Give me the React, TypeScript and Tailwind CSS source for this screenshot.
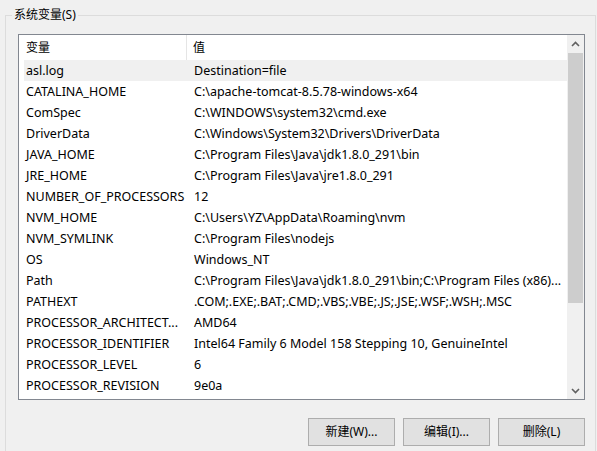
const rows: [string, string][] = [
  ["asl.log", "Destination=file"],
  ["CATALINA_HOME", "C:\\apache-tomcat-8.5.78-windows-x64"],
  ["ComSpec", "C:\\WINDOWS\\system32\\cmd.exe"],
  ["DriverData", "C:\\Windows\\System32\\Drivers\\DriverData"],
  ["JAVA_HOME", "C:\\Program Files\\Java\\jdk1.8.0_291\\bin"],
  ["JRE_HOME", "C:\\Program Files\\Java\\jre1.8.0_291"],
  ["NUMBER_OF_PROCESSORS", "12"],
  ["NVM_HOME", "C:\\Users\\YZ\\AppData\\Roaming\\nvm"],
  ["NVM_SYMLINK", "C:\\Program Files\\nodejs"],
  ["OS", "Windows_NT"],
  ["Path", "C:\\Program Files\\Java\\jdk1.8.0_291\\bin;C:\\Program Files (x86)..."],
  ["PATHEXT", ".COM;.EXE;.BAT;.CMD;.VBS;.VBE;.JS;.JSE;.WSF;.WSH;.MSC"],
  ["PROCESSOR_ARCHITECT...", "AMD64"],
  ["PROCESSOR_IDENTIFIER", "Intel64 Family 6 Model 158 Stepping 10, GenuineIntel"],
  ["PROCESSOR_LEVEL", "6"],
  ["PROCESSOR_REVISION", "9e0a"],
];

const font = { fontFamily: '"Noto Sans", "Noto Sans CJK SC", sans-serif' };

function Chevron({ up }: { up?: boolean }) {
  return (
    <svg width="9" height="6" viewBox="0 0 9 6" className={up ? "" : "rotate-180"}>
      <path d="M1 5 L4.5 1.5 L8 5" fill="none" stroke="#606060" strokeWidth="1.6" />
    </svg>
  );
}

function Btn({ label }: { label: string }) {
  return (
    <button className="w-[87px] h-[28px] border border-[#adadad] bg-[#e1e1e1] text-[12px] text-black leading-none">
      {label}
    </button>
  );
}

export default function App() {
  return (
    <div className="w-[597px] h-[451px] bg-[#f0f0f0] pt-[15px] pl-[5px] overflow-hidden text-[12px] text-black" style={font}>
      <div className="relative w-[591px] h-[450px] border-t border-l border-r border-[#dcdcdc] pl-[12px] pt-[18px]">
        <span className="absolute left-[6px] -top-[9px] px-[2px] bg-[#f0f0f0] leading-[16px]">系统变量(S)</span>

        <div className="w-[567px] h-[366px] border border-[#828790] bg-white flex">
          <div className="flex-1 flex flex-col">
            <div className="h-[25px] flex items-center">
              <div className="w-[168px] h-full pl-[7px] flex items-center border-r border-[#e5e5e5]">变量</div>
              <div className="pl-[6px]">值</div>
            </div>
            {rows.map(([name, value], idx) => (
              <div key={idx} className={`ml-[5px] h-[21px] pt-[1px] flex items-center whitespace-nowrap text-[12.5px] ${idx === 0 ? "bg-[#f0f0f0]" : ""}`}>
                <div className="w-[163px] pl-[2px]">{name}</div>
                <div className="pl-[7px]">{value}</div>
              </div>
            ))}
          </div>
          <div className="w-[17px] bg-[#f0f0f0] flex flex-col items-center">
            <div className="h-[17px] flex items-center justify-center">
              <Chevron up />
            </div>
            <div className="mt-[1px] w-[15px] h-[250px] bg-[#cdcdcd]" />
            <div className="flex-1" />
            <div className="h-[17px] flex items-center justify-center">
              <Chevron />
            </div>
          </div>
        </div>

        <div className="w-[567px] mt-[18px] flex justify-end gap-[8px]">
          <Btn label="新建(W)..." />
          <Btn label="编辑(I)..." />
          <Btn label="删除(L)" />
        </div>
      </div>
    </div>
  );
}
